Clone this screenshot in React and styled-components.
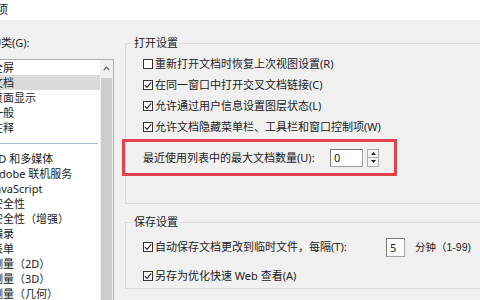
import React from 'react';
import styled, { createGlobalStyle } from 'styled-components';

const GlobalStyle = createGlobalStyle`
  html, body {
    margin: 0;
    padding: 0;
    background: #f0f0f0;
  }
`;

const Window = styled.div`
  width: 480px;
  height: 300px;
  overflow: hidden;
  display: flex;
  flex-direction: column;
  background: #f0f0f0;
  font-family: "Noto Sans", "Noto Sans CJK SC", sans-serif;
  font-size: 11px;
  line-height: 14px;
  color: #222222;
`;

const TitleBar = styled.div`
  flex: none;
  height: 20px;
  background: #ffffff;
  display: flex;
  align-items: center;
  font-size: 12px;
  white-space: nowrap;
`;

const TitleText = styled.span`
  margin-left: -28px;
`;

const Body = styled.div`
  flex: 1;
  min-height: 0;
  display: flex;
  align-items: flex-start;
  padding-top: 16px;
`;

const LeftPane = styled.div`
  flex: none;
  width: 124px;
  margin-left: -10px;
  display: flex;
  flex-direction: column;
`;

const PaneLabel = styled.div`
  height: 14px;
  margin-bottom: 9px;
  white-space: nowrap;
`;

const ListBox = styled.div`
  height: 260px;
  display: flex;
  background: #ffffff;
  border: 1px solid #abadb3;
`;

const ListItems = styled.div`
  flex: 1;
  min-width: 0;
  display: flex;
  flex-direction: column;
`;

const ListItem = styled.div`
  height: 15px;
  line-height: 15px;
  padding-left: 1px;
  white-space: nowrap;
  overflow: hidden;
  background: ${p => (p.$selected ? '#dadada' : 'transparent')};
`;

const Separator = styled.div`
  height: 16px;
  display: flex;
  align-items: center;

  &::after {
    content: '';
    flex: 1;
    height: 1px;
    margin-right: 2px;
    background: #9dbcd2;
  }
`;

const ScrollBar = styled.div`
  flex: none;
  width: 13px;
  display: flex;
  flex-direction: column;
  background: #f0f0f0;
`;

const ScrollButton = styled.div`
  height: 17px;
  display: flex;
  align-items: center;
  justify-content: center;
`;

const ScrollThumb = styled.div`
  flex: 1;
  margin: 1px 1px 0;
  background: #cdcdcd;
`;

const RightPane = styled.div`
  flex: none;
  width: 400px;
  margin-left: 11px;
  display: flex;
  flex-direction: column;
`;

const Group = styled.fieldset`
  margin: 0;
  padding: ${p => p.$pad};
  border: 1px solid #dadada;
  min-inline-size: 0;

  & + & {
    margin-top: 11px;
  }
`;

const GroupTitle = styled.legend`
  padding: 0 2px;
  line-height: 14px;
`;

const Rows = styled.div`
  display: flex;
  flex-direction: column;
  gap: ${p => p.$gap || 0}px;
  padding-left: 11px;
`;

const Row = styled.div`
  height: ${p => p.$h}px;
  display: flex;
  align-items: center;
  white-space: nowrap;
`;

const Check = styled.label`
  display: flex;
  align-items: center;
  gap: 2px;
`;

const Box = styled.span`
  flex: none;
  width: 10px;
  height: 10px;
  box-sizing: border-box;
  border: 1px solid #333333;
  background: #ffffff;
  display: flex;
  align-items: center;
  justify-content: center;
`;

const CheckText = styled.span`
  width: ${p => (p.$w ? `${p.$w}px` : 'auto')};
`;

const Highlight = styled.div`
  height: 37px;
  width: 275px;
  box-sizing: border-box;
  margin: 2px 0 0 -21px;
  padding-left: 18px;
  border: 3px solid #e2434c;
  display: flex;
  align-items: center;
  white-space: nowrap;
`;

const FieldLabel = styled.span`
  width: ${p => p.$w}px;
`;

const NumInput = styled.div`
  width: ${p => p.$w}px;
  height: ${p => p.$h}px;
  box-sizing: border-box;
  padding-left: 3px;
  background: #ffffff;
  border: 1px solid #a0a0a0;
  border-top-color: #7a7a7a;
  border-left-color: #7a7a7a;
  line-height: ${p => p.$h - 2}px;
`;

const Spinner = styled.div`
  margin-left: 4px;
  display: flex;
  flex-direction: column;
`;

const SpinButton = styled.div`
  width: 12px;
  height: 9px;
  box-sizing: border-box;
  border: 1px solid #adadad;
  background: #f2f2f2;
  display: flex;
  align-items: center;
  justify-content: center;

  & + & {
    border-top: none;
  }
`;

const Unit = styled.span`
  margin-left: 10px;
  font-family: "Liberation Sans", "Noto Sans CJK SC", sans-serif;
  font-size: 10.5px;
`;

const categories = [
  { name: '全屏' },
  { name: '文档', selected: true },
  { name: '页面显示' },
  { name: '一般' },
  { name: '注释' },
  { separator: true },
  { name: '3D 和多媒体' },
  { name: 'Adobe 联机服务' },
  { name: 'JavaScript' },
  { name: '安全性' },
  { name: '安全性（增强）' },
  { name: '编录' },
  { name: '表单' },
  { name: '测量（2D）' },
  { name: '测量（3D）' },
  { name: '测量（几何）' },
];

const openOptions = [
  { text: '重新打开文档时恢复上次视图设置(R)', checked: false },
  { text: '在同一窗口中打开交叉文档链接(C)', checked: true },
  { text: '允许通过用户信息设置图层状态(L)', checked: true },
  { text: '允许文档隐藏菜单栏、工具栏和窗口控制项(W)', checked: true },
];

function CheckBox({ checked, children, width }) {
  return (
    <Check>
      <Box>
        {checked && (
          <svg width="8" height="8" viewBox="0 0 8 8">
            <path d="M0.8 4.2 L3 6.4 L7.2 1.4" fill="none" stroke="#222" strokeWidth="1.1" />
          </svg>
        )}
      </Box>
      <CheckText $w={width}>{children}</CheckText>
    </Check>
  );
}

function Triangle({ up }) {
  return (
    <svg width="5" height="3" viewBox="0 0 5 3">
      <polygon points={up ? '0,3 2.5,0 5,3' : '0,0 2.5,3 5,0'} fill="#222" />
    </svg>
  );
}

export default function App() {
  return (
    <Window>
      <GlobalStyle />
      <TitleBar>
        <TitleText>首选项</TitleText>
      </TitleBar>
      <Body>
        <LeftPane>
          <PaneLabel>种类(G):</PaneLabel>
          <ListBox>
            <ListItems>
              {categories.map((item, i) =>
                item.separator ? (
                  <Separator key={i} />
                ) : (
                  <ListItem key={i} $selected={item.selected}>
                    {item.name}
                  </ListItem>
                )
              )}
            </ListItems>
            <ScrollBar>
              <ScrollButton>
                <svg width="7" height="5" viewBox="0 0 7 5">
                  <path d="M0.8 4 L3.5 1.2 L6.2 4" fill="none" stroke="#606060" strokeWidth="1.2" />
                </svg>
              </ScrollButton>
              <ScrollThumb />
            </ScrollBar>
          </ListBox>
        </LeftPane>

        <RightPane>
          <Group $pad="3px 0 27px 6px">
            <GroupTitle>打开设置</GroupTitle>
            <Rows>
              {openOptions.map(opt => (
                <Row key={opt.text} $h={21}>
                  <CheckBox checked={opt.checked}>{opt.text}</CheckBox>
                </Row>
              ))}
              <Highlight>
                <FieldLabel $w={187}>最近使用列表中的最大文档数量(U):</FieldLabel>
                <NumInput $w={33} $h={18}>0</NumInput>
                <Spinner>
                  <SpinButton>
                    <Triangle up />
                  </SpinButton>
                  <SpinButton>
                    <Triangle />
                  </SpinButton>
                </Spinner>
              </Highlight>
            </Rows>
          </Group>

          <Group $pad="6px 0 0 6px">
            <GroupTitle>保存设置</GroupTitle>
            <Rows $gap={5}>
              <Row $h={24}>
                <CheckBox checked width={231}>
                  自动保存文档更改到临时文件，每隔(T):
                </CheckBox>
                <NumInput $w={19} $h={19}>5</NumInput>
                <Unit>分钟（1-99)</Unit>
              </Row>
              <Row $h={24}>
                <CheckBox checked>另存为优化快速 Web 查看(A)</CheckBox>
              </Row>
            </Rows>
          </Group>
        </RightPane>
      </Body>
    </Window>
  );
}
